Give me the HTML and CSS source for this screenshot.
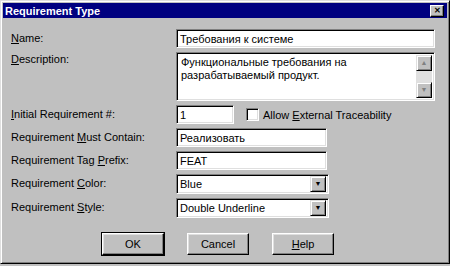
FILE: index.html
```html
<!DOCTYPE html>
<html lang="ru">
  <head>
    <meta charset="utf-8" />
    <link rel="stylesheet" href="styles.css">
  </head>
  <body>
    <div class="window">
      <div class="titlebar">
        <span class="title">Requirement Type</span>
        <button class="close">&#x2715;</button>
      </div>

      <div class="form">
        <label class="lbl"><u>N</u>ame:</label>
        <input class="edit wide" value="Требования к системе">

        <label class="lbl top"><u>D</u>escription:</label>
        <div class="memo">
          <div class="memo-text">Функциональные требования на разрабатываемый продукт.</div>
          <div class="scroll">
            <span class="sbtn">&#9650;</span>
            <span class="track"></span>
            <span class="sbtn">&#9660;</span>
          </div>
        </div>

        <label class="lbl"><u>I</u>nitial Requirement #:</label>
        <div class="line">
          <input class="edit short" value="1">
          <span class="check"></span>
          <span class="check-lbl">Allow <u>E</u>xternal Traceability</span>
        </div>

        <label class="lbl">Requirement <u>M</u>ust Contain:</label>
        <input class="edit mid" value="Реализовать">

        <label class="lbl">Requirement Tag <u>P</u>refix:</label>
        <input class="edit mid" value="FEAT">

        <label class="lbl">Requirement <u>C</u>olor:</label>
        <div class="combo">
          <span class="combo-text">Blue</span>
          <span class="drop">&#9660;</span>
        </div>

        <label class="lbl">Requirement <u>S</u>tyle:</label>
        <div class="combo">
          <span class="combo-text">Double Underline</span>
          <span class="drop">&#9660;</span>
        </div>
      </div>

      <div class="buttons">
        <button class="btn default">OK</button>
        <button class="btn">Cancel</button>
        <button class="btn"><u>H</u>elp</button>
      </div>
    </div>
  </body>
</html>
```

FILE: styles.css
```css
body {
  margin: 0;
  background: #c0c0c0;
  font-family: "Liberation Sans", Arial, sans-serif;
  font-size: 11px;
  color: #000;
}

.window {
  width: 450px;
  height: 264px;
  box-sizing: border-box;
  padding: 1px;
  background: #c0c0c0;
  border: 1px solid;
  border-color: #dfdfdf #000 #000 #dfdfdf;
  box-shadow: inset 1px 1px #fff, inset -1px -1px #808080;
}

.titlebar {
  height: 15px;
  margin: 1px;
  padding: 0 3px 0 2px;
  background: #000080;
  color: #fff;
  display: flex;
  align-items: center;
  justify-content: space-between;
}

.title {
  font-weight: bold;
  font-size: 11px;
}

.close {
  width: 14px;
  height: 12px;
  padding: 0;
  background: #c0c0c0;
  border: 1px solid;
  border-color: #fff #000 #000 #fff;
  box-shadow: inset -1px -1px #808080;
  font-size: 8px;
  font-weight: bold;
  line-height: 10px;
  color: #000;
}

.form {
  display: grid;
  grid-template-columns: 165px auto;
  justify-items: start;
  row-gap: 4px;
  padding: 10px 0 0 9px;
}

.lbl {
  line-height: 19px;
}

/* метка многострочного поля прижата к верху */
.lbl.top {
  line-height: 13px;
  padding-top: 1px;
}

.edit,
.memo,
.combo,
.check {
  box-sizing: border-box;
  background: #fff;
  border: 1px solid;
  border-color: #808080 #fff #fff #808080;
  box-shadow: inset 1px 1px #000, inset -1px -1px #dfdfdf;
}

.edit {
  height: 19px;
  padding: 0 3px;
  font: inherit;
  color: #000;
  outline: none;
}

.wide {
  width: 259px;
}

.short {
  width: 58px;
}

.mid {
  width: 151px;
}

.memo {
  width: 259px;
  height: 49px;
  display: flex;
  padding: 2px;
}

.memo-text {
  flex: 1;
  padding: 1px 2px;
  line-height: 13px;
}

.scroll {
  width: 16px;
  display: flex;
  flex-direction: column;
  background: #e0e0e0;
}

.sbtn,
.drop {
  width: 16px;
  height: 16px;
  box-sizing: border-box;
  background: #c0c0c0;
  border: 1px solid;
  border-color: #dfdfdf #000 #000 #dfdfdf;
  box-shadow: inset 1px 1px #fff, inset -1px -1px #808080;
  font-size: 7px;
  line-height: 14px;
  text-align: center;
  color: #808080;
}

.track {
  flex: 1;
}

.line {
  display: flex;
  align-items: center;
}

.check {
  width: 13px;
  height: 13px;
  margin-left: 12px;
}

.check-lbl {
  margin-left: 4px;
}

.combo {
  width: 153px;
  height: 20px;
  display: flex;
  align-items: center;
  padding: 2px;
}

.combo-text {
  flex: 1;
  padding-left: 1px;
}

.drop {
  color: #000;
}

.buttons {
  display: flex;
  gap: 23px;
  padding: 15px 0 0 100px;
}

.btn {
  width: 62px;
  height: 22px;
  padding: 0;
  font: inherit;
  color: #000;
  background: #c0c0c0;
  border: 1px solid;
  border-color: #fff #000 #000 #fff;
  box-shadow: inset -1px -1px #808080, inset 1px 1px #dfdfdf;
}

.btn.default {
  outline: 1px solid #000;
}
```
